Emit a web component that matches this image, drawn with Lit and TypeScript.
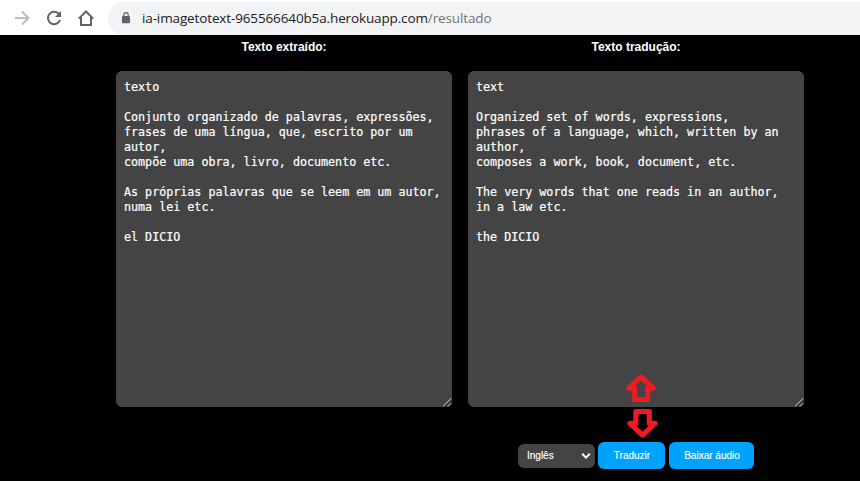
import { LitElement, html, css, svg } from "lit";
import { customElement } from "lit/decorators.js";

const EXTRACTED = `texto

Conjunto organizado de palavras, expressões,
frases de uma língua, que, escrito por um
autor,
compõe uma obra, livro, documento etc.

As próprias palavras que se leem em um autor,
numa lei etc.

el DICIO`;

const TRANSLATED = `text

Organized set of words, expressions,
phrases of a language, which, written by an
author,
composes a work, book, document, etc.

The very words that one reads in an author,
in a law etc.

the DICIO`;

const arrowShape = svg`<path d="M15 2.8 L27.2 14.2 H21.6 V25.6 H8.6 V14.2 H2.8 Z" fill="none" stroke="#ed1c24" stroke-width="5" stroke-linejoin="round"/>`;

@customElement("browser-bar")
class BrowserBar extends LitElement {
  static styles = css`
    :host { display: flex; height: 35px; background: #fff; box-sizing: border-box; padding: 2px 0 0 14px; }
    .icon { display: block; width: 16px; height: 16px; margin: 8px 16px 0 0; flex: none; }
    .address {
      flex: 1; height: 33px; margin-left: -2px; padding-left: 14px; display: flex;
      background: #f1f3f4; border-radius: 17px 0 0 17px;
    }
    .lock { display: block; width: 8px; height: 12px; margin: 10px 12px 0 0; flex: none; }
    .url { font: 13.5px/32px "Open Sans", sans-serif; color: #202124; white-space: nowrap; letter-spacing: -0.13px; }
    .path { color: #70757a; }
  `;
  render() {
    return html`
      <svg class="icon" viewBox="0 0 16 16" fill="none" stroke="#babcbe" stroke-width="2"><path d="M1 8H14M8 1.5L14.5 8L8 14.5"/></svg>
      <svg class="icon" viewBox="0 0 16 16"><path d="M13.1 4.2A6.2 6.2 0 1 0 14 10" fill="none" stroke="#5f6368" stroke-width="2"/><path d="M15 1V7H9Z" fill="#5f6368"/></svg>
      <svg class="icon" viewBox="0 0 16 16" fill="none" stroke="#5f6368" stroke-width="2"><path d="M.8 8.6L8 1.5L15.2 8.6M3 7.2V15H13V7.2"/></svg>
      <div class="address">
        <svg class="lock" viewBox="0 0 8 12"><rect y="4" width="8" height="7.3" rx="1" fill="#5f6368"/><path d="M1.8 4.5V2.8a2.2 2.2 0 0 1 4.4 0V4.5" fill="none" stroke="#5f6368" stroke-width="1.2"/></svg>
        <span class="url">ia-imagetotext-965566640b5a.herokuapp.com<span class="path">/resultado</span></span>
      </div>
    `;
  }
}

@customElement("app-root")
class AppRoot extends LitElement {
  static styles = css`
    :host { display: flex; flex-direction: column; width: 860px; height: 483px; position: relative; background: #fff; overflow: hidden; font-family: "Liberation Sans", Arial, sans-serif; }
    main { height: 446px; background: #000; color: #fff; }
    .columns { display: flex; gap: 16px; padding: 5px 0 0 116px; }
    .column { width: 336px; }
    h2 { margin: 0 0 16px; font-size: 12px; line-height: 15px; font-weight: 700; text-align: center; }
    .box { position: relative; box-sizing: border-box; height: 336px; padding: 9px 8px 8px; background: #444; border-radius: 6px; }
    pre { margin: 0; font: 11.7px/15px "DejaVu Sans Mono", monospace; -webkit-text-stroke: 0.2px #fff; }
    .grip { position: absolute; right: 0; bottom: 0; width: 9px; height: 9px; }
    .actions { display: flex; align-items: center; padding: 35px 0 0 518px; font-size: 10px; }
    .select { display: flex; align-items: center; justify-content: space-between; box-sizing: border-box; width: 77px; height: 24px; padding: 0 4px 0 9px; margin-right: 3px; background: #444; border-radius: 6px; }
    .select, button { -webkit-text-stroke: 0.15px #fff; }
    .chevron { width: 10px; height: 8px; }
    button { height: 27px; padding: 0 0 0 1px; margin-right: 4px; border: 0; border-radius: 6px; background: #00a2ff; color: #fff; font: 10px "Liberation Sans", Arial, sans-serif; }
    .translate { width: 67px; }
    .download { width: 85px; }
    .arrow { position: absolute; width: 30px; height: 29px; }
    .up { left: 626px; top: 374px; }
    .down { left: 627px; top: 408px; width: 31px; height: 30px; transform: scaleY(-1); }
  `;

  column(title: string, text: string) {
    return html`
      <section class="column">
        <h2>${title}</h2>
        <div class="box">
          <pre>${text}</pre>
          <svg class="grip" viewBox="0 0 9 9"><path d="M0 8.5L8 .5M5 8.5L8 5.5" stroke="#ddd" stroke-width="1"/><path d="M1.2 8.8L8.5 1.5" stroke="#222" stroke-width=".7"/></svg>
        </div>
      </section>
    `;
  }

  render() {
    return html`
      <browser-bar></browser-bar>
      <main>
        <div class="columns">
          ${this.column("Texto extraído:", EXTRACTED)}
          ${this.column("Texto tradução:", TRANSLATED)}
        </div>
        <div class="actions">
          <div class="select">
            <span>Inglês</span>
            <svg class="chevron" viewBox="0 0 10 8"><path d="M1.2 1.8L5 5.6L8.8 1.8" fill="none" stroke="#fff" stroke-width="2"/></svg>
          </div>
          <button class="translate">Traduzir</button>
          <button class="download">Baixar áudio</button>
        </div>
      </main>
      <svg class="arrow up" viewBox="0 0 30 29">${arrowShape}</svg>
      <svg class="arrow down" viewBox="0 0 30 29">${arrowShape}</svg>
    `;
  }
}
